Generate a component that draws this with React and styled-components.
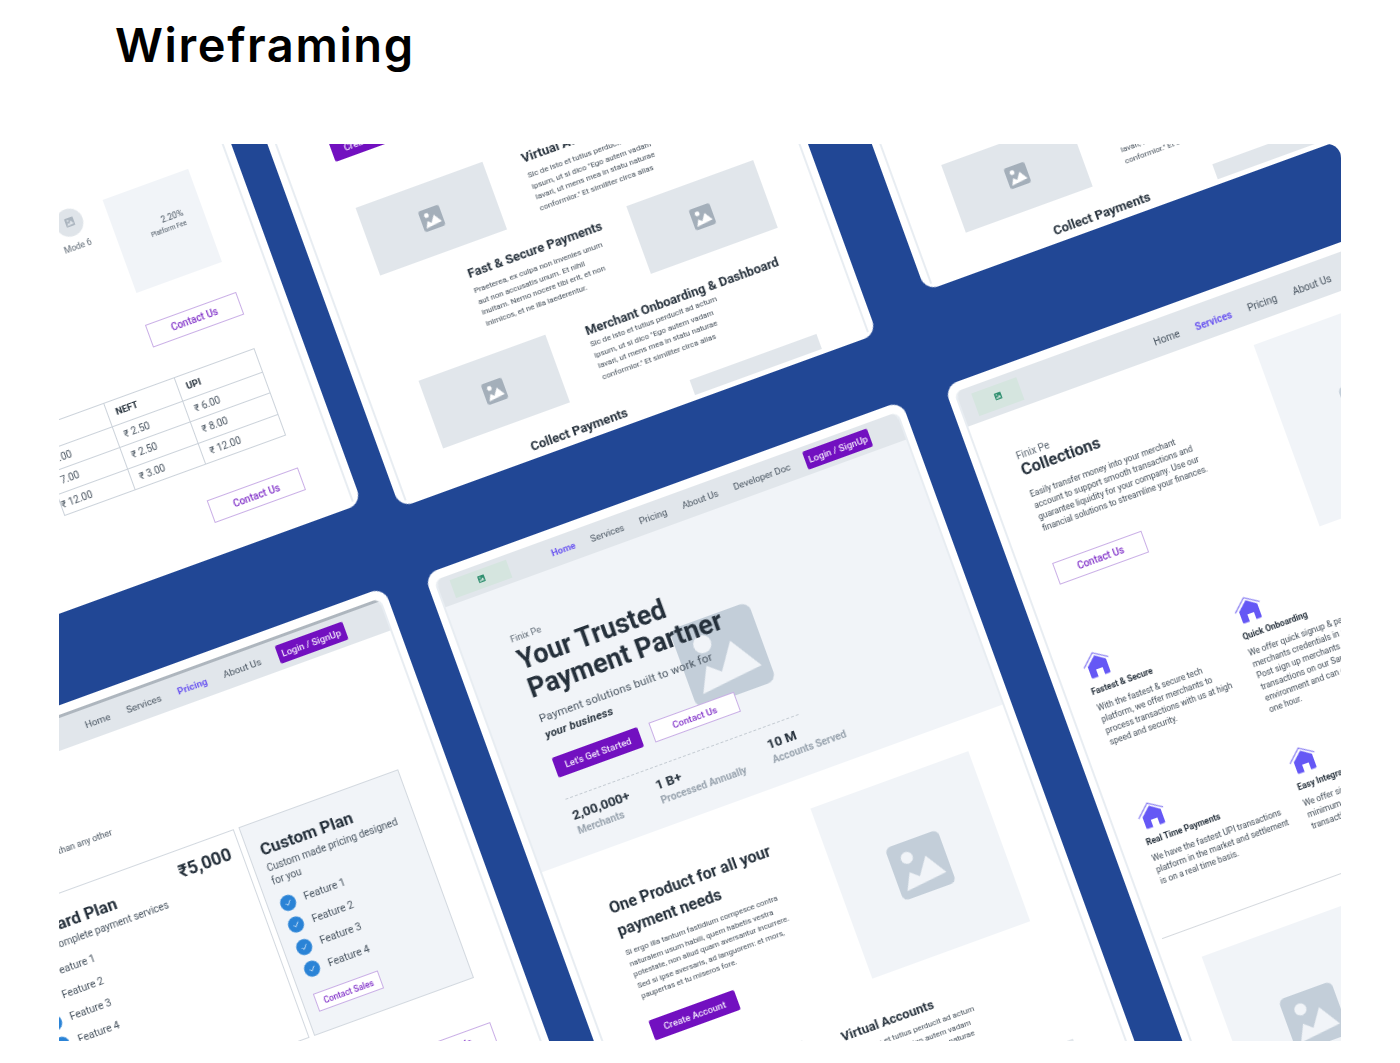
import styled, { createGlobalStyle } from "styled-components"

const GlobalStyle = createGlobalStyle`
  html, body { margin: 0; padding: 0; background: #fff; }
  body { font-family: Roboto, "Liberation Sans", sans-serif; color: #25303b; }
`

const Page = styled.div`
  width: 1400px;
  height: 1063px;
  overflow: hidden;
`

const Heading = styled.h1`
  height: 144px;
  margin: 0;
  padding: 15px 0 0 115px;
  box-sizing: border-box;
  font: 600 47px/60px Inter, sans-serif;
  letter-spacing: 1.62px;
  color: #000;
`

const Frame = styled.div`
  position: relative;
  width: 1282px;
  height: 897px;
  margin-left: 59px;
  overflow: hidden;
  border-radius: 0 14px 0 0;
  background: #214795;
`

/* free canvas: screens are laid out in the rotated plane, origin at page 0,0 */
const Canvas = styled.div`
  position: absolute;
  left: -59px;
  top: -144px;
  width: 0;
  height: 0;
  transform-origin: 0 0;
  transform: rotate(-20deg);
  filter: blur(0.35px);
`

const Card = styled.div`
  position: absolute;
  left: ${p => p.$u}px;
  top: ${p => p.$v}px;
  width: ${p => p.$w || 508}px;
  height: ${p => p.$h}px;
  box-sizing: border-box;
  padding: 9px 7px 5px;
  background: #fff;
  border-radius: 14px;
  overflow: hidden;
`

const Screen = styled.div`
  height: 100%;
  display: flex;
  flex-direction: column;
  justify-content: ${p => (p.$bottom ? "flex-end" : "flex-start")};
  align-items: stretch;
  border-left: 2px solid #e8edf2;
  border-right: 2px solid #e8edf2;
  border-radius: 8px 8px 0 0;
  overflow: hidden;
`

const Nav = styled.div`
  flex: none;
  height: ${p => p.$h}px;
  display: flex;
  align-items: center;
  background: #e1e6eb;
  padding-left: ${p => p.$pad}px;
  box-sizing: border-box;
  border-top: ${p => (p.$strip ? "3px solid #aeb6be" : "none")};
`

const Logo = styled.div`
  width: ${p => p.$w}px;
  height: ${p => p.$hh}px;
  margin-right: ${p => p.$gap}px;
  display: flex;
  align-items: center;
  justify-content: center;
  background: #d5e5df;
`

const NavLink = styled.span`
  font-size: ${p => p.$fs}px;
  font-weight: ${p => (p.$on ? 700 : 400)};
  color: ${p => (p.$on ? "#6a55f0" : "#46525e")};
  margin: ${p => p.$drop || 0}px ${p => p.$gap}px 0 0;
  white-space: nowrap;
`

const Solid = styled.div`
  width: ${p => p.$w || 91}px;
  height: ${p => p.$h || 21}px;
  display: flex;
  align-items: center;
  justify-content: center;
  background: #7210c0;
  color: #f1e6fb;
  border-radius: 2px;
  font-size: 9.5px;
  font-weight: 500;
  white-space: nowrap;
`

const Outline = styled.div`
  width: ${p => p.$w || 91}px;
  height: ${p => p.$h || 21}px;
  box-sizing: border-box;
  display: flex;
  align-items: center;
  justify-content: center;
  background: #fff;
  border: 1px solid #c9aee6;
  color: #8132c9;
  font-size: ${p => p.$fs || 9.5}px;
  font-weight: 500;
  white-space: nowrap;
`

const Hero = styled.div`
  position: relative;
  flex: none;
  height: 282px;
  box-sizing: border-box;
  padding: 47px 0 0 50px;
  background: #f1f4f8;
`

const HeroArt = styled.div`
  position: absolute;
  left: 202px;
  top: 98px;
`

const HeroText = styled.div`
  position: relative;
`

const Eyebrow = styled.div`
  font-size: ${p => p.$fs || 9.2}px;
  line-height: 12px;
  color: #5d6873;
`

const HeroTitle = styled.h2`
  margin: 2px 0 8px;
  font-size: 27px;
  line-height: 30px;
  font-weight: 700;
  color: #25303b;
  white-space: nowrap;
`

const HeroSub = styled.p`
  margin: 0 0 15px;
  font-size: 11.4px;
  line-height: 17px;
  letter-spacing: 0.2px;
  color: #46525e;
  white-space: pre-line;
  b { font-style: italic; color: #25303b; }
`

const Buttons = styled.div`
  display: flex;
  gap: 12px;
  margin-left: -2px;
`

const Dashed = styled.div`
  width: 248px;
  margin: 22px 0 9px -3px;
  border-top: 1px dashed #c5ccd3;
`

const Stats = styled.div`
  display: flex;
  gap: 28px;
  margin-left: -2px;
`

const Stat = styled.div`
  display: flex;
  flex-direction: column;
  gap: 2px;
  strong { font-size: 13.5px; line-height: 16px; font-weight: 700; color: #25303b; }
  span { font-size: 10.2px; line-height: 13px; font-weight: 700; color: #97a2ad; }
`

const ProductRow = styled.div`
  flex: none;
  display: flex;
  height: 243px;
  box-sizing: border-box;
  padding: 32px 0 0 51px;
`

const ProductText = styled.div`
  width: 223px;
  padding-top: 14px;
  h3 { margin: 0 0 5px; font-size: 16px; line-height: 24px; font-weight: 700; color: #25303b; white-space: pre-line; }
`

const Body = styled.p`
  margin: ${p => p.$m || 0};
  font-size: ${p => p.$fs || 8}px;
  line-height: ${p => p.$lh || 11.5}px;
  color: #3f4a55;
  white-space: pre-line;
`

const PushDown = styled.div`
  margin-top: ${p => p.$m || 0}px;
  margin-left: ${p => p.$l || 0}px;
`

const Placeholder = styled.div`
  flex: none;
  width: ${p => p.$w}px;
  height: ${p => p.$h}px;
  margin: ${p => p.$m || 0};
  display: flex;
  align-items: center;
  justify-content: center;
  background: ${p => p.$bg};
`

const FeatureRow = styled.div`
  flex: none;
  display: flex;
  height: ${p => p.$h}px;
  padding-left: ${p => p.$pad}px;
`

const FeatureText = styled.div`
  flex: none;
  width: ${p => p.$w || "auto"};
  padding-top: ${p => p.$top || 0}px;
  h4 { margin: 0 0 4px; font-size: 13px; line-height: 17px; font-weight: 700; color: #25303b; white-space: nowrap; }
`

const PlansBlock = styled.div`
  padding: 0 0 0 17px;
`

const PlanIntro = styled.div`
  margin: 88px 0 33px;
  font-size: 9px;
  line-height: 12px;
  color: #46525e;
  white-space: nowrap;
`

const Plans = styled.div`
  display: flex;
  gap: 5px;
`

const Plan = styled.div`
  width: ${p => p.$w}px;
  height: 222px;
  box-sizing: border-box;
  padding: ${p => (p.$muted ? "14px 10px 0 12px" : "14px 10px 0 14px")};
  background: ${p => (p.$muted ? "#f1f4f8" : "#fff")};
  border: 1px solid #d2d8df;
`

const PlanHead = styled.div`
  display: flex;
  justify-content: space-between;
  align-items: flex-start;
  height: 27px;
  strong { margin-top: 2px; font-size: 17px; line-height: 24px; font-weight: 700; color: #25303b; white-space: nowrap; }
  em { font-style: normal; font-size: 18px; line-height: 20px; font-weight: 700; color: #25303b; margin-top: -3px; }
`

const PlanDesc = styled.div`
  font-size: 10px;
  line-height: 14px;
  color: #46525e;
  white-space: pre-line;
  margin-bottom: 6px;
`

const Feature = styled.div`
  display: flex;
  align-items: center;
  gap: 9px;
  height: 23.5px;
  font-size: 10.5px;
  color: #46525e;
`

const Check = styled.span`
  flex: none;
  width: 16px;
  height: 16px;
  border-radius: 50%;
  background: #2a83d6;
  display: flex;
  align-items: center;
  justify-content: center;
`

const RightButton = styled.div`
  display: flex;
  justify-content: flex-end;
  margin: ${p => p.$m || "0"};
  padding-right: ${p => p.$r || 0}px;
`

const FeeRow = styled.div`
  display: flex;
  justify-content: flex-end;
  align-items: flex-start;
  padding-right: 40px;
`

const Mode = styled.div`
  width: 50px;
  margin: -4px 14px 0 0;
  display: flex;
  flex-direction: column;
  align-items: center;
  gap: 6px;
  font-size: 8.5px;
  color: #5d6873;
`

const ModeDot = styled.div`
  width: 28px;
  height: 28px;
  border-radius: 50%;
  background: #dfe4e9;
  display: flex;
  align-items: center;
  justify-content: center;
`

const Fee = styled.div`
  width: 91px;
  height: 99px;
  display: flex;
  align-items: center;
  justify-content: center;
  background: #f1f4f8;
  color: #46525e;
`

const FeeText = styled.div`
  display: flex;
  flex-direction: column;
  align-items: flex-end;
  gap: 2px;
  margin: -10px 0 0 14px;
  font-size: 8.5px;
  line-height: 10px;
  small { font-size: 6.5px; line-height: 8px; }
`

const RateTable = styled.table`
  border-collapse: collapse;
  margin: 35px 39px 34px auto;
  font-size: 10px;
  color: #46525e;
  th, td { box-sizing: border-box; border: 1px solid #cbd2da; padding: 0 0 0 8px; text-align: left; }
  th { height: 25px; font-size: 9.5px; font-weight: 700; color: #25303b; }
  td { height: 22.5px; }
  td:first-child { padding-left: 0; }
`

const ServicesIntro = styled.div`
  flex: none;
  display: flex;
  justify-content: space-between;
  height: 214px;
  box-sizing: border-box;
  padding: 21px 10px 0 35px;
`

const IntroText = styled.div`
  padding-top: 18px;
  h2 { margin: -3px 0 7px; font-size: 16.5px; line-height: 24px; font-weight: 700; color: #25303b; }
`

const FeatureGrid = styled.div`
  flex: none;
  display: grid;
  grid-template-columns: 161px 161px;
  grid-auto-rows: 160px;
  height: 320px;
  margin-top: 38px;
  padding-left: 25px;
`

const FeatureItem = styled.div`
  h5 { margin: 1px 0 5px; font-size: 8.5px; line-height: 11px; font-weight: 700; color: #25303b; white-space: nowrap; }
`

const Rule = styled.div`
  flex: none;
  height: 1px;
  margin: -25px 0 30px 7px;
  background: #d5d9de;
`

const ImageIcon = ({ size, color, light = "#fff" }) => (
  <svg width={size} height={size} viewBox="0 0 24 24">
    <rect x="0" y="0" width="24" height="24" rx="2.6" fill={color} />
    <path d="M3 20.5 6.6 13.2 10.2 16.3 15.4 8.8 21.5 18.4Z" fill={light} />
    <circle cx="7.6" cy="7" r="2.6" fill={light} />
  </svg>
)

const HouseIcon = () => (
  <svg width="30" height="30" viewBox="0 0 30 30">
    <path d="M1 15 14 3 28 12" fill="none" stroke="#8b80f2" strokeWidth="1.2" />
    <path d="M5 15 15 6 25 13V26a1.5 1.5 0 0 1-1.5 1.5H19V20h-7v7.5H6.5A1.5 1.5 0 0 1 5 26Z" fill="#6558f5" />
  </svg>
)

const CheckIcon = () => (
  <svg width="10" height="10" viewBox="0 0 10 10">
    <path d="M2.4 5.2 4.3 7.2 7.8 2.8" fill="none" stroke="#dcebfa" strokeWidth="1" />
  </svg>
)

const Bar = ({ links, active, h, pad, logo, gap, fs, drop, strip, login }) => (
  <Nav $h={h} $pad={pad} $strip={strip}>
    {logo && (
      <Logo $w={logo[0]} $hh={logo[1]} $gap={logo[2]}>
        <ImageIcon size={7} color="#2f8f6f" light="#d5e5df" />
      </Logo>
    )}
    {links.map(l => (
      <NavLink key={l} $on={l === active} $gap={gap} $fs={fs} $drop={drop}>{l}</NavLink>
    ))}
    {login && <Solid $w={login} $h={19}>Login / SignUp</Solid>}
  </Nav>
)

const sicDe = `Sic de isto et tutius perducit ad actum
ipsum, ut si dico "Ego autem vadam
lavari, ut mens mea in statu naturae
conformior." Et similiter circa alias`

const PaymentRows = () => (
  <>
    <FeatureRow $h={95} $pad={52}>
      <Placeholder $w={135} $h={72} $m="4px 38px 0 0" $bg="#e1e6eb"><ImageIcon size={22} color="#a4afba" /></Placeholder>
      <FeatureText $top={6}>
        <h4>Virtual Accounts</h4>
        <Body>{sicDe}</Body>
      </FeatureText>
    </FeatureRow>
    <FeatureRow $h={85} $pad={135}>
      <FeatureText $w="172px" $top={1}>
        <h4>Fast &amp; Secure Payments</h4>
        <Body>{`Praeterea, ex culpa non invenies unum
aut non accusatis unum. Et nihil
inuitam. Nemo nocere tibi erit, et non
inimicos, et ne illa laederentur.`}</Body>
      </FeatureText>
      <Placeholder $w={135} $h={72} $bg="#e1e6eb"><ImageIcon size={22} color="#a4afba" /></Placeholder>
    </FeatureRow>
    <FeatureRow $h={100} $pad={52}>
      <Placeholder $w={135} $h={72} $m="8px 39px 0 0" $bg="#e1e6eb"><ImageIcon size={22} color="#a4afba" /></Placeholder>
      <FeatureText $top={10}>
        <h4>Merchant Onboarding &amp; Dashboard</h4>
        <Body $m="-4px 0 0">{sicDe}</Body>
      </FeatureText>
    </FeatureRow>
    <FeatureRow $h={16} $pad={135}>
      <FeatureText $w="172px" $top={0}>
        <h4>Collect Payments</h4>
      </FeatureText>
      <Placeholder $w={135} $h={16} $bg="#e1e6eb" />
    </FeatureRow>
  </>
)

const features = [
  { title: "Fastest & Secure", text: "With the fastest & secure tech\nplatform, we offer merchants to\nprocess transactions with us at high\nspeed and security." },
  { title: "Quick Onboarding", text: "We offer quick signup & paperless\nmerchants credentials in a day.\nPost sign up merchants can test\ntransactions on our Sandbox\nenvironment and can go live in\none hour." },
  { title: "Real Time Payments", text: "We have the fastest UPI transactions\nplatform in the market and settlement\nis on a real time basis." },
  { title: "Easy Integration", text: "We offer simple APIs with\nminimum code for easy\ntransactions." },
]

const planFeatures = ["Feature 1", "Feature 2", "Feature 3", "Feature 4"]

const rates = [
  ["₹ 5.00", "₹ 2.50", "₹ 6.00"],
  ["₹ 7.00", "₹ 2.50", "₹ 8.00"],
  ["₹ 12.00", "₹ 3.00", "₹ 12.00"],
]

const PlanList = () => planFeatures.map(f => (
  <Feature key={f}><Check><CheckIcon /></Check>{f}</Feature>
))

export default function App() {
  return (
    <Page>
      <GlobalStyle />
      <Heading>Wireframing</Heading>
      <Frame>
        <Canvas>
          {/* pricing page, lower part */}
          <Card $u={-340} $v={-103} $h={700}>
            <Screen $bottom>
              <FeeRow>
                <Mode>
                  <ModeDot><ImageIcon size={9} color="#aab4be" light="#dfe4e9" /></ModeDot>
                  Mode 6
                </Mode>
                <Fee>
                  <FeeText>2.20%<small>Platform Fee</small></FeeText>
                </Fee>
              </FeeRow>
              <RightButton $m="33px 0 0" $r={37}><Outline $w={97} $h={24} $fs={10}>Contact Us</Outline></RightButton>
              <RateTable>
                <colgroup>
                  <col width="75" /><col width="75" /><col width="85" />
                </colgroup>
                <thead>
                  <tr><th></th><th>NEFT</th><th>UPI</th></tr>
                </thead>
                <tbody>
                  {rates.map(r => (
                    <tr key={r[0]}>{r.map((c, i) => <td key={i}>{c}</td>)}</tr>
                  ))}
                </tbody>
              </RateTable>
              <RightButton $m="0 0 27px" $r={39}><Outline $w={97} $h={24} $fs={10}>Contact Us</Outline></RightButton>
            </Screen>
          </Card>

          {/* home page, lower part */}
          <Card $u={202} $v={-86} $h={700}>
            <Screen $bottom>
              <PushDown $l={49}><Solid>Create Account</Solid></PushDown>
              <PushDown $m={46} />
              <PaymentRows />
            </Screen>
          </Card>

          <Card $u={770} $v={-110} $h={700}>
            <Screen $bottom>
              <PushDown $l={-3}>
                <PaymentRows />
              </PushDown>
            </Screen>
          </Card>

          {/* pricing page, upper part */}
          <Card $u={-348} $v={683} $h={800}>
            <Screen>
              <Bar h={34} pad={171} strip links={["Home", "Services", "Pricing", "About Us"]} active="Pricing" gap={17.5} fs={9.8} login={72} />
              <PlansBlock>
                <PlanIntro>We charge far lesser, than any other</PlanIntro>
                <Plans>
                  <Plan $w={258}>
                    <PlanHead><strong>Standard Plan</strong><em>₹5,000</em></PlanHead>
                    <PlanDesc>Built to complete payment services</PlanDesc>
                    <PlanList />
                  </Plan>
                  <Plan $w={170} $muted>
                    <PlanHead><strong>Custom Plan</strong></PlanHead>
                    <PlanDesc>{"Custom made pricing designed\nfor you"}</PlanDesc>
                    <PlanList />
                    <PushDown $m={12}><Outline $w={69} $h={19} $fs={8.5}>Contact Sales</Outline></PushDown>
                  </Plan>
                </Plans>
                <RightButton $m="47px 0 0" $r={40}><Outline $w={97} $h={24} $fs={10}>Contact Us</Outline></RightButton>
              </PlansBlock>
            </Screen>
          </Card>

          {/* home page, upper part */}
          <Card $u={202} $v={685} $h={800}>
            <Screen>
              <Bar h={29} pad={13} logo={[60, 19, 45]} links={["Home", "Services", "Pricing", "About Us", "Developer Doc"]} active="Home" gap={16.5} fs={9.4} login={69} />
              <Hero>
                <HeroArt><ImageIcon size={84} color="#c3ced9" light="#f1f4f8" /></HeroArt>
                <HeroText>
                  <Eyebrow>Finix Pe</Eyebrow>
                  <HeroTitle>Your Trusted<br />Payment Partner</HeroTitle>
                  <HeroSub>Payment solutions built to work for{"\n"}<b>your business</b></HeroSub>
                  <Buttons>
                    <Solid>Let's Get Started</Solid>
                    <Outline>Contact Us</Outline>
                  </Buttons>
                  <Dashed />
                  <Stats>
                    <Stat><strong>2,00,000+</strong><span>Merchants</span></Stat>
                    <Stat><strong>1 B+</strong><span>Processed Annually</span></Stat>
                    <Stat><strong>10 M</strong><span>Accounts Served</span></Stat>
                  </Stats>
                </HeroText>
              </Hero>
              <ProductRow>
                <ProductText>
                  <h3>{"One Product for all your\npayment needs"}</h3>
                  <Body $fs={7.9}>{`Si ergo illa tantum fastidium compesce contra
naturalem usum habili, quem habetis vestra
potestate, non aliud quam aversantur incurrere.
Sed si ipse aversaris, ad languorem: et mors,
paupertas et tu miseros fore.`}</Body>
                  <PushDown $m={19} $l={-2}><Solid>Create Account</Solid></PushDown>
                </ProductText>
                <Placeholder $w={168} $h={181} $bg="#f1f4f8"><ImageIcon size={56} color="#c3ced9" light="#f1f4f8" /></Placeholder>
              </ProductRow>
              <PaymentRows />
            </Screen>
          </Card>

          {/* services page */}
          <Card $u={755} $v={686} $h={900}>
            <Screen>
              <Bar h={37} pad={14} logo={[74, 24, 141]} links={["Home", "Services", "Pricing", "About Us", "Developer Doc"]} active="Services" gap={17} fs={10} drop={6} />
              <ServicesIntro>
                <IntroText>
                  <Eyebrow $fs={10}>Finix Pe</Eyebrow>
                  <h2>Collections</h2>
                  <Body $fs={8.5} $lh={12}>{`Easily transfer money into your merchant
account to support smooth transactions and
guarantee liquidity for your company. Use our
financial solutions to streamline your finances.`}</Body>
                  <PushDown $m={30} $l={-3}><Outline $w={95} $h={23} $fs={10}>Contact Us</Outline></PushDown>
                </IntroText>
                <Placeholder $w={184} $h={193} $bg="#f1f4f8"><ImageIcon size={56} color="#c3ced9" light="#f1f4f8" /></Placeholder>
              </ServicesIntro>
              <FeatureGrid>
                {features.map(f => (
                  <FeatureItem key={f.title}>
                    <HouseIcon />
                    <h5>{f.title}</h5>
                    <Body $fs={8.4} $lh={12}>{f.text}</Body>
                  </FeatureItem>
                ))}
              </FeatureGrid>
              <Rule />
              <PushDown $l={38}>
                <Placeholder $w={170} $h={190} $bg="#f1f4f8"><ImageIcon size={56} color="#c3ced9" light="#f1f4f8" /></Placeholder>
              </PushDown>
            </Screen>
          </Card>
        </Canvas>
      </Frame>
    </Page>
  )
}
